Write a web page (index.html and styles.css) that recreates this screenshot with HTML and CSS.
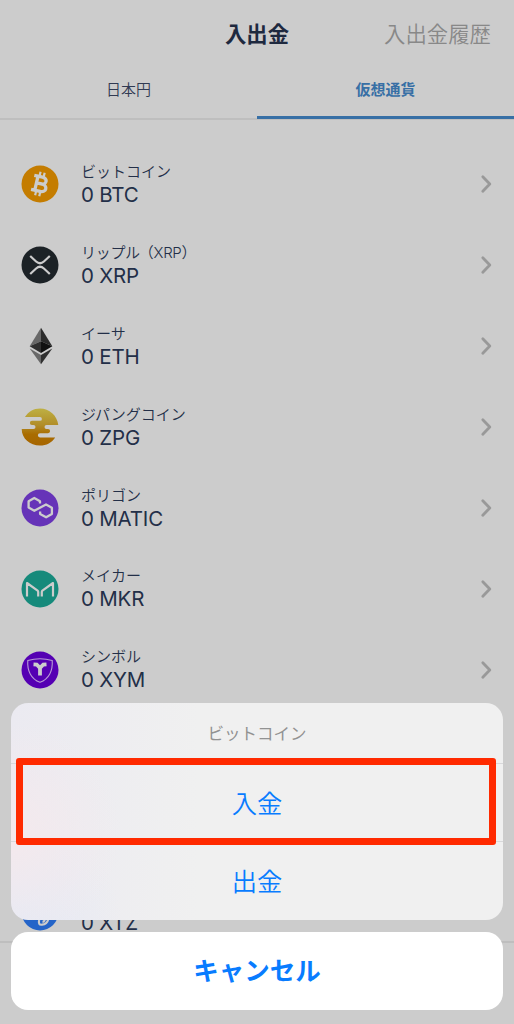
FILE: index.html
```
<!DOCTYPE html>
<html lang="ja">
<head>
<meta charset="utf-8">
<title>入出金</title>
<link rel="stylesheet" href="styles.css">
</head>
<body>
<svg width="0" height="0" class="defs"><defs><symbol id="chevron" viewBox="0 0 12 20"><path d="M2.800 2.800 9.800 10 2.800 17.200" fill="none" stroke="#999" stroke-width="2.800" stroke-linecap="round" stroke-linejoin="round"/></symbol></defs></svg>
<main class="screen">
  <header class="header"><span></span><h1 class="title">入出金</h1><a class="history">入出金履歴</a></header>
  <nav class="tabs"><a class="tab">日本円</a><a class="tab active">仮想通貨</a></nav>
  <ul class="coins">
    <li class="coin">
      <svg class="icon" viewBox="0 0 38 38"><circle cx="19" cy="19" r="18.5" fill="#c47c00"/><g transform="rotate(13 19 19)" fill="none" stroke="#ccc"><path d="M11.500 11.800H20c5.800 0 5.800 6.800 0 6.800h-4.600M15.400 18.600h5.200c6.800 0 6.800 7.600 0 7.600h-9.100M15.300 11.800v14.400" stroke-width="3.300"/><path d="M16.800 7v4M21 7v4M16.800 27v4M21 27v4" stroke-width="2.200"/></g></svg>
      <div class="info"><span class="name">ビットコイン</span><span class="amount">0 BTC</span></div><svg class="chev"><use href="#chevron"/></svg>
    </li>
    <li class="coin">
      <svg class="icon" viewBox="0 0 38 38"><circle cx="19" cy="19" r="18.5" fill="#1c2226"/><path d="M9.200 10l5.900 5.500q3.900 3.500 7.800 0l5.900-5.500M9.200 28l5.900-5.500q3.900-3.500 7.800 0l5.900 5.500" fill="none" stroke="#ccc" stroke-width="2.200"/></svg>
      <div class="info"><span class="name xrp">リップル<span class="paren">（</span>XRP）</span><span class="amount">0 XRP</span></div><svg class="chev"><use href="#chevron"/></svg>
    </li>
    <li class="coin">
      <svg class="icon" viewBox="0 0 38 38"><path d="M20 .8v13.400L8.700 19.300z" fill="#686868"/><path d="M20 .8l11.300 18.500L20 14.200z" fill="#2b2b2b"/><path d="M20 14.200v11.900L8.700 19.300z" fill="#303030"/><path d="M20 14.200l11.300 5.100L20 26.100z" fill="#111"/><path d="M8.700 21.500l11.300 6.600v9.100z" fill="#686868"/><path d="M31.300 21.500L20 28.100v9.100z" fill="#303030"/></svg>
      <div class="info"><span class="name">イーサ</span><span class="amount">0 ETH</span></div><svg class="chev"><use href="#chevron"/></svg>
    </li>
    <li class="coin">
      <svg class="icon" viewBox="0 0 38 38"><defs><linearGradient id="gold" x2="0" y2="1"><stop stop-color="#beb044"/><stop offset=".45" stop-color="#b18d28"/><stop offset=".7" stop-color="#a96c00"/><stop offset="1" stop-color="#a66500"/></linearGradient></defs><path d="M4 9C7 3.800 12.700.5 19 .5c9.300 0 17.200 7 18.300 16.500H25.500a2 2 0 0 0 0 4H27a2.100 2.100 0 0 1 0 4.200H19a2.100 2.100 0 0 0 0 4.200h15.200C30.900 34.500 25.500 37.500 19 37.500 8.800 37.500.7 30.500.7 21H12.500a2 2 0 0 0 0-4H11a2.100 2.100 0 0 1 0-4.200h8a1.900 1.900 0 0 0 0-3.800z" fill="url(#gold)"/></svg>
      <div class="info"><span class="name">ジパングコイン</span><span class="amount">0 ZPG</span></div><svg class="chev"><use href="#chevron"/></svg>
    </li>
    <li class="coin">
      <svg class="icon" viewBox="0 0 38 38"><circle cx="19" cy="19" r="18.500" fill="#6633b8"/><path d="M19 14.500v-2.300L13.300 9l-5.700 3.200v6.400l5.700 3.200L25 15.400l5.900 3.300v6.300l-5.800 3.300-6-3.300v-2.500" fill="none" stroke="#ccc" stroke-width="2.300" stroke-linejoin="round"/></svg>
      <div class="info"><span class="name">ポリゴン</span><span class="amount">0 MATIC</span></div><svg class="chev"><use href="#chevron"/></svg>
    </li>
    <li class="coin">
      <svg class="icon" viewBox="0 0 38 38"><circle cx="19" cy="19" r="18.500" fill="#168a7b"/><path d="M6 26.500V13l10.600 7.600q.6.500.6 1.300v4.600M32 26.500V13l-10.600 7.600q-.6.500-.6 1.300v4.600" fill="none" stroke="#ccc" stroke-width="2.200" stroke-linejoin="round"/></svg>
      <div class="info"><span class="name">メイカー</span><span class="amount">0 MKR</span></div><svg class="chev"><use href="#chevron"/></svg>
    </li>
    <li class="coin">
      <svg class="icon" viewBox="0 0 38 38"><circle cx="19" cy="19" r="18.500" fill="#5500b3"/><path d="M6.800 9.500Q19 6 31.200 9.500C32 19.500 28 28 19 31.300 10 28 6 19.500 6.800 9.500z" fill="none" stroke="#b99bd6" stroke-width="1.100"/><path d="M12.500 13.300l3.200.2 3.300 3.500 3.300-3.500 3.200-.2M19 16.500v8" fill="none" stroke="#ccc" stroke-width="3.800"/></svg>
      <div class="info"><span class="name">シンボル</span><span class="amount">0 XYM</span></div><svg class="chev"><use href="#chevron"/></svg>
    </li>
    <li class="coin"></li>
    <li class="coin"></li>
    <li class="coin">
      <svg class="icon" viewBox="0 0 38 38"><circle cx="19" cy="19" r="18.500" fill="#2464c8"/><path d="M18.200 27q-1.400 5.200 2.800 4.700 5-.6 6.200-5.200M21.500 28.800q2.600-.2 2.200-4" fill="none" stroke="#ccc" stroke-width="2.200"/></svg>
      <div class="info"><span class="name"></span><span class="amount">0 XTZ</span></div>
    </li>
  </ul>
  <div class="footer"></div>
</main>
<div class="sheet">
  <div class="actions">
    <div class="heading">ビットコイン</div>
    <div class="action first">入金<div class="highlight"></div></div>
    <div class="action">出金</div>
  </div>
  <div class="cancel">キャンセル</div>
</div>
</body>
</html>
```
FILE: styles.css
```
* { box-sizing: border-box; }
body { margin: 0; width: 514px; height: 1024px; overflow: hidden; position: relative; background: #ccc; color: #232f48; font-family: Inter, "Noto Sans CJK JP", sans-serif; }
.defs { position: absolute; }
.screen { height: 1024px; display: flex; flex-direction: column; overflow: hidden; }
.header { height: 67px; flex: none; display: grid; grid-template-columns: 1fr auto 1fr; align-items: center; padding: 0 23px; }
.title { margin: 0; font-size: 21.400px; font-weight: 700; color: #1e293f; line-height: 32px; }
.history { justify-self: end; font-size: 21.400px; font-weight: 350; color: #888; line-height: 32px; }
.tabs { height: 53px; flex: none; display: flex; border-bottom: 2px solid #bebebe; }
.tab { flex: 1; height: 52px; display: flex; align-items: center; justify-content: center; padding-bottom: 9px; font-size: 15px; font-weight: 350; color: #303a52; }
.tab.active { color: #376fa5; font-weight: 700; border-bottom: 3px solid #376fa5; padding-bottom: 6px; }
.coins { margin: 0; padding: 24px 0 0; list-style: none; flex: none; height: 821px; overflow: hidden; }
.coin { height: 80.900px; display: flex; align-items: center; padding: 0 22px 0 21px; }
.icon { width: 38px; height: 38px; flex: none; }
.info { flex: 1; margin-left: 22px; display: flex; flex-direction: column; }
.name { height: 20px; line-height: 20px; font-size: 15px; font-weight: 350; white-space: nowrap; }
.xrp { letter-spacing: -.3px; }
.paren { margin-left: -1px; }
.amount { height: 25px; line-height: 25px; font-size: 20.500px; font-weight: 400; letter-spacing: -.2px; }
.chev { width: 12px; height: 20px; flex: none; }
.footer { flex: 1; border-top: 2px solid #bebebe; }
.sheet { position: absolute; left: 11px; right: 11px; bottom: 14.500px; display: flex; flex-direction: column; gap: 12px; }
.actions { height: 217px; border-radius: 17px; background: radial-gradient(circle at 0 60%, #f4e9ed 0, transparent 110px), radial-gradient(circle at 10px 100%, #e6eaf4 0, transparent 100px), linear-gradient(90deg, #ebeaf1, #f0f0f0 38%); }
.heading { height: 60px; display: flex; align-items: center; justify-content: center; font-size: 16.500px; font-weight: 400; color: #929292; }
.action { height: 78.500px; position: relative; border-top: 1px solid #d8d8da; display: flex; align-items: center; justify-content: center; padding-bottom: 1px; font-size: 25.300px; font-weight: 350; color: #087cff; }
.first { z-index: 1; }
.highlight { position: absolute; left: 5px; right: 7px; top: -6px; height: 87px; border: 7px solid #ff2a00; border-radius: 3px; }
.cancel { height: 78px; border-radius: 17px; background: #fff; display: flex; align-items: center; justify-content: center; padding-bottom: 5px; color: #087cff; font-size: 25.500px; font-weight: 700; }
```
